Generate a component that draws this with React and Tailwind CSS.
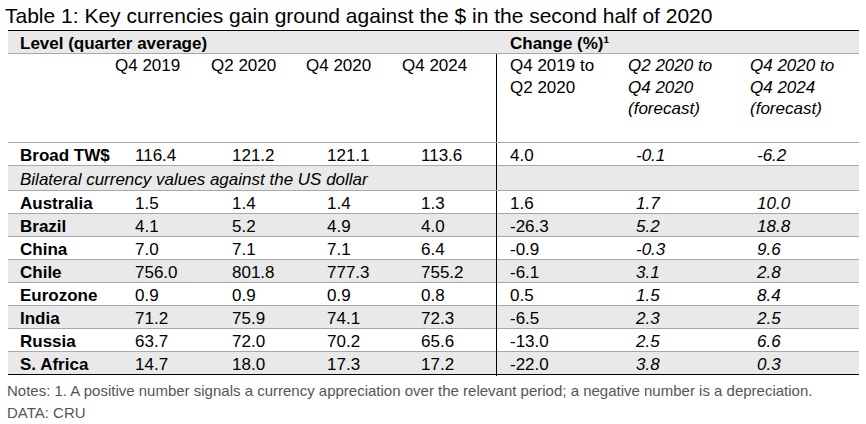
const levelCols = ['Q4 2019', 'Q2 2020', 'Q4 2020', 'Q4 2024']

const rows = [
  ['Australia', '1.5', '1.4', '1.4', '1.3', '1.6', '1.7', '10.0'],
  ['Brazil', '4.1', '5.2', '4.9', '4.0', '-26.3', '5.2', '18.8'],
  ['China', '7.0', '7.1', '7.1', '6.4', '-0.9', '-0.3', '9.6'],
  ['Chile', '756.0', '801.8', '777.3', '755.2', '-6.1', '3.1', '2.8'],
  ['Eurozone', '0.9', '0.9', '0.9', '0.8', '0.5', '1.5', '8.4'],
  ['India', '71.2', '75.9', '74.1', '72.3', '-6.5', '2.3', '2.5'],
  ['Russia', '63.7', '72.0', '70.2', '65.6', '-13.0', '2.5', '6.6'],
  ['S. Africa', '14.7', '18.0', '17.3', '17.2', '-22.0', '3.8', '0.3'],
]

const grid = 'grid grid-cols-[107px_96px_95px_96px_94px_118px_122px_1fr]'

function DataRow({ r, shaded, last }) {
  return (
    <div
      className={`${grid} h-[23px] leading-[22px] ${shaded ? 'bg-[#e9e9e9]' : 'bg-white'} ${
        last ? 'border-b border-black' : 'border-b border-[#a8a8a8]'
      }`}
    >
      <div className="pl-[12px] pt-[2px] font-bold">{r[0]}</div>
      <div className="pl-[20px] pt-[2px]">{r[1]}</div>
      <div className="pl-[21px] pt-[2px]">{r[2]}</div>
      <div className="pl-[21px] pt-[2px]">{r[3]}</div>
      <div className="pl-[19px] pt-[2px]">{r[4]}</div>
      <div className="border-l border-black pl-[13px] pt-[2px]">{r[5]}</div>
      <div className="pl-[22px] pt-[2px] italic">{r[6]}</div>
      <div className="pl-[21px] pt-[2px] italic">{r[7]}</div>
    </div>
  )
}

export default function App() {
  return (
    <div className="w-[866px] h-[424px] bg-white text-black font-['Liberation_Sans',Arial,sans-serif] overflow-hidden">
      <h1 className="pl-[5px] pt-[3px] h-[30px] text-[21px] leading-[26px]">
        Table 1: Key currencies gain ground against the $ in the second half of 2020
      </h1>

      <div className="ml-[8px] w-[851px] border-t border-black text-[17px]">
        <div className="h-[23px] bg-[#e9e9e9] border-b border-[#a8a8a8] flex font-bold leading-[22px] pt-[2px]">
          <div className="w-[488px] pl-[12px]">Level (quarter average)</div>
          <div className="pl-[14px]">Change (%)¹</div>
        </div>

        <div className={`${grid} h-[89px] border-b border-[#a8a8a8] leading-[21.5px]`}>
          <div />
          {levelCols.map((c) => (
            <div key={c} className="pt-[1px]">
              {c}
            </div>
          ))}
          <div className="border-l border-black pl-[13px] pt-[1px]">
            Q4 2019 to
            <br />
            Q2 2020
          </div>
          <div className="pl-[14px] pt-[1px] italic">
            Q2 2020 to
            <br />
            Q4 2020
            <br />
            (forecast)
          </div>
          <div className="pl-[14px] pt-[1px] italic">
            Q4 2020 to
            <br />
            Q4 2024
            <br />
            (forecast)
          </div>
        </div>

        <div className={`${grid} h-[23px] leading-[22px] border-b border-[#a8a8a8]`}>
          <div className="pl-[12px] pt-[2px] font-bold">Broad TW$</div>
          <div className="pl-[20px] pt-[2px]">116.4</div>
          <div className="pl-[21px] pt-[2px]">121.2</div>
          <div className="pl-[21px] pt-[2px]">121.1</div>
          <div className="pl-[19px] pt-[2px]">113.6</div>
          <div className="border-l border-black pl-[13px] pt-[2px]">4.0</div>
          <div className="pl-[22px] pt-[2px] italic">-0.1</div>
          <div className="pl-[21px] pt-[2px] italic">-6.2</div>
        </div>

        <div className="h-[25px] flex bg-[#e9e9e9] border-b border-[#a8a8a8] leading-[22px]">
          <div className="w-[488px] pl-[12px] pt-[3px] italic whitespace-nowrap">
            Bilateral currency values against the US dollar
          </div>
          <div className="border-l border-black" />
        </div>

        {rows.map((r, i) => (
          <DataRow key={r[0]} r={r} shaded={i % 2 === 1} last={i === rows.length - 1} />
        ))}
      </div>

      <div className="pl-[7px] pt-[5px] text-[15px] leading-[22px] text-[#555]">
        <p>
          Notes: 1. A positive number signals a currency appreciation over the relevant period; a negative
          number is a depreciation.
        </p>
        <p>DATA: CRU</p>
      </div>
    </div>
  )
}
